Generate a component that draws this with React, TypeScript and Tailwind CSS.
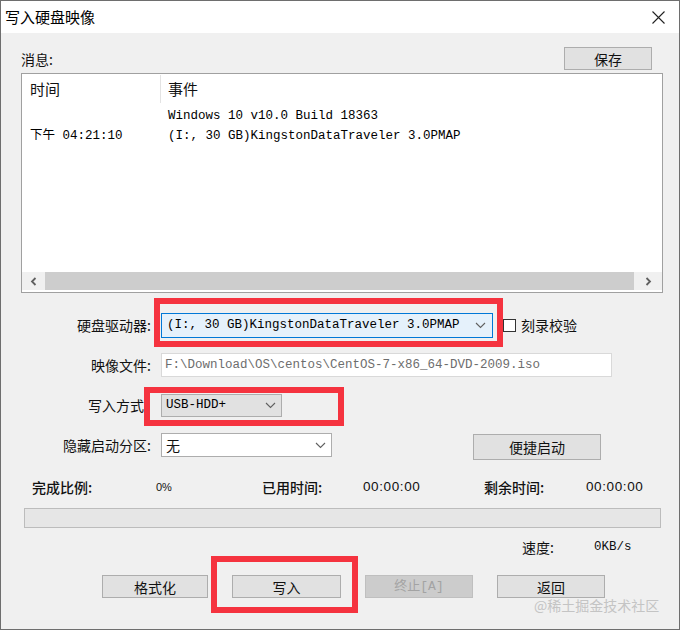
import React from "react";

const ui = { fontFamily: '"Noto Sans CJK SC", "Noto Sans", sans-serif' };
const mono = { fontFamily: '"Liberation Mono", "Noto Sans CJK SC", monospace' };

function Chevron({ className = "" }: { className?: string }) {
  return (
    <svg width="11" height="7" viewBox="0 0 11 7" className={className}>
      <path d="M1 1 L5.5 5.5 L10 1" fill="none" stroke="#606060" strokeWidth="1.1" />
    </svg>
  );
}

function Btn({ children, disabled = false, w }: { children: React.ReactNode; disabled?: boolean; w: string }) {
  return (
    <div
      className={`${w} h-[23px] flex items-center justify-center text-[14px] leading-none border ${
        disabled ? "bg-[#cccccc] border-[#bfbfbf] text-[#a3a3a3]" : "bg-[#e1e1e1] border-[#adadad] text-[#111]"
      }`}
      style={ui}
    >
      {children}
    </div>
  );
}

export default function App() {
  return (
    <div
      className="relative w-[680px] h-[630px] bg-[#f0f0f0] border border-[#6e6e6e] overflow-hidden text-[#111]"
      style={ui}
    >
      {/* Title bar */}
      <div className="h-[32px] bg-white flex items-center pl-[4px] pr-[14px]">
        <span className="text-[15px] text-black">写入硬盘映像</span>
        <svg width="13" height="13" viewBox="0 0 13 13" className="ml-auto">
          <path d="M0.5 0.5 L12.5 12.5 M12.5 0.5 L0.5 12.5" stroke="#222" strokeWidth="1.1" />
        </svg>
      </div>

      {/* 消息 row */}
      <div className="mt-[14px] h-[23px] flex items-center pl-[20px] pr-[27px]">
        <span className="text-[14px] mt-[2px]">消息:</span>
        <div className="ml-auto">
          <Btn w="w-[88px]">保存</Btn>
        </div>
      </div>

      {/* List box */}
      <div className="mt-[3px] ml-[20px] w-[642px] h-[220px] border border-[#a0a0a0] bg-white flex flex-col pb-[2px]">
        <div className="h-[30px] flex items-center text-[15px]">
          <div className="w-[138px] pl-[8px] h-full flex items-center">时间</div>
          <div className="w-px h-[28px] bg-[#e3e3e3]" />
          <div className="pl-[7px]">事件</div>
        </div>
        <div className="flex-1 pt-[2px] text-[12.5px] text-black" style={mono}>
          <div className="h-[20px] flex items-center">
            <div className="w-[139px]" />
            <div className="pl-[7px]">Windows 10 v10.0 Build 18363</div>
          </div>
          <div className="h-[20px] flex items-center">
            <div className="w-[139px] pl-[8px]">下午 04:21:10</div>
            <div className="pl-[7px]">(I:, 30 GB)KingstonDataTraveler 3.0PMAP</div>
          </div>
        </div>
        <div className="h-[18px] flex bg-[#f0f0f0]">
          <div className="w-[23px] flex items-center justify-center">
            <svg width="7" height="9" viewBox="0 0 7 9">
              <path d="M5.5 1 L2 4.5 L5.5 8" fill="none" stroke="#606060" strokeWidth="1.8" />
            </svg>
          </div>
          <div className="flex-1 bg-[#cdcdcd]" />
          <div className="w-[28px] flex items-center justify-center">
            <svg width="7" height="9" viewBox="0 0 7 9">
              <path d="M1.5 1 L5 4.5 L1.5 8" fill="none" stroke="#606060" strokeWidth="1.8" />
            </svg>
          </div>
        </div>
      </div>

      {/* Row 1: 硬盘驱动器 */}
      <div className="mt-[20px] h-[25px] flex items-center">
        <div className="w-[151px] text-right text-[14px] pr-[1px]">硬盘驱动器:</div>
        <div className="ml-[9px] w-[332px] h-[25px] bg-[#e5f1fb] border border-[#0078d7] flex items-center pl-[5px] pr-[6px] text-[12.5px] text-black" style={mono}>
          <span>(I:, 30 GB)KingstonDataTraveler 3.0PMAP</span>
          <Chevron className="ml-auto" />
        </div>
        <div className="ml-[10px] w-[13px] h-[13px] border border-[#333] bg-white" />
        <span className="ml-[5px] text-[14px]">刻录校验</span>
      </div>

      {/* Row 2: 映像文件 */}
      <div className="mt-[15px] h-[24px] flex items-center">
        <div className="w-[151px] text-right text-[14px] pr-[1px]">映像文件:</div>
        <div className="ml-[9px] w-[451px] h-[24px] bg-white border border-[#d9d9d9] flex items-center pl-[3px] text-[12.5px] text-[#6d6d6d]" style={mono}>
          F:\Download\OS\centos\CentOS-7-x86_64-DVD-2009.iso
        </div>
      </div>

      {/* Row 3: 写入方式 */}
      <div className="mt-[17px] h-[23px] flex items-center">
        <div className="w-[151px] text-right text-[14px] pr-[8px]">写入方式</div>
        <div className="ml-[9px] w-[121px] h-[23px] bg-[#e1e1e1] border border-[#adadad] flex items-center pl-[4px] pr-[5px] text-[12.5px] text-black" style={mono}>
          <span>USB-HDD+</span>
          <Chevron className="ml-auto" />
        </div>
      </div>

      {/* Row 4: 隐藏启动分区 */}
      <div className="mt-[16px] h-[27px] flex items-start">
        <div className="w-[151px] h-[24px] flex items-center justify-end text-[14px] pr-[1px]">隐藏启动分区:</div>
        <div className="ml-[9px] w-[171px] h-[24px] bg-white border border-[#adadad] flex items-center pl-[4px] pr-[5px] text-[14px]">
          <span>无</span>
          <Chevron className="ml-auto" />
        </div>
        <div className="ml-[141px] mt-[1px] w-[128px] h-[26px] bg-[#e1e1e1] border border-[#adadad] flex items-center justify-center text-[14px]">
          便捷启动
        </div>
      </div>

      {/* Stats row */}
      <div className="mt-[17px] h-[20px] ml-[31px] grid grid-cols-[124px_106px_101px_121px_102px_auto] items-center text-[14px]">
        <span className="font-medium">完成比例:</span>
        <span className="text-[11px]" style={{ fontFamily: '"Liberation Sans", sans-serif' }}>0%</span>
        <span className="font-medium">已用时间:</span>
        <span className="text-[13.5px] tracking-[0.6px]" style={{ fontFamily: '"Liberation Sans", sans-serif' }}>00:00:00</span>
        <span className="font-medium">剩余时间:</span>
        <span className="text-[13.5px] tracking-[0.6px]" style={{ fontFamily: '"Liberation Sans", sans-serif' }}>00:00:00</span>
      </div>

      {/* Progress bar */}
      <div className="mt-[11px] ml-[23px] w-[637px] h-[20px] bg-[#e6e6e6] border border-[#bcbcbc]" />

      {/* Speed row */}
      <div className="mt-[9px] h-[20px] flex items-center">
        <span className="ml-[521px] text-[14px]">速度:</span>
        <span className="ml-[40px] text-[12.5px]" style={mono}>0KB/s</span>
      </div>

      {/* Buttons */}
      <div className="mt-[18px] ml-[101px] flex gap-[24px]">
        <Btn w="w-[106px]">格式化</Btn>
        <Btn w="w-[109px]">写入</Btn>
        <Btn w="w-[108px]" disabled>
          <span style={mono} className="text-[13px]">终止[A]</span>
        </Btn>
        <Btn w="w-[108px]">返回</Btn>
      </div>

      {/* Red annotation boxes */}
      <div className="absolute left-[153px] top-[297px] w-[349px] h-[49px] border-[6px] border-[#f5333f] pointer-events-none" />
      <div className="absolute left-[143px] top-[386px] w-[200px] h-[39px] border-[6px] border-[#f5333f] pointer-events-none" />
      <div className="absolute left-[210px] top-[555px] w-[147px] h-[57px] border-[6px] border-[#f5333f] pointer-events-none" />

      {/* Watermark */}
      <div className="absolute left-[533px] top-[597px] text-[14px] leading-none text-[#c4c4c4] whitespace-nowrap">
        @稀土掘金技术社区
      </div>
    </div>
  );
}
